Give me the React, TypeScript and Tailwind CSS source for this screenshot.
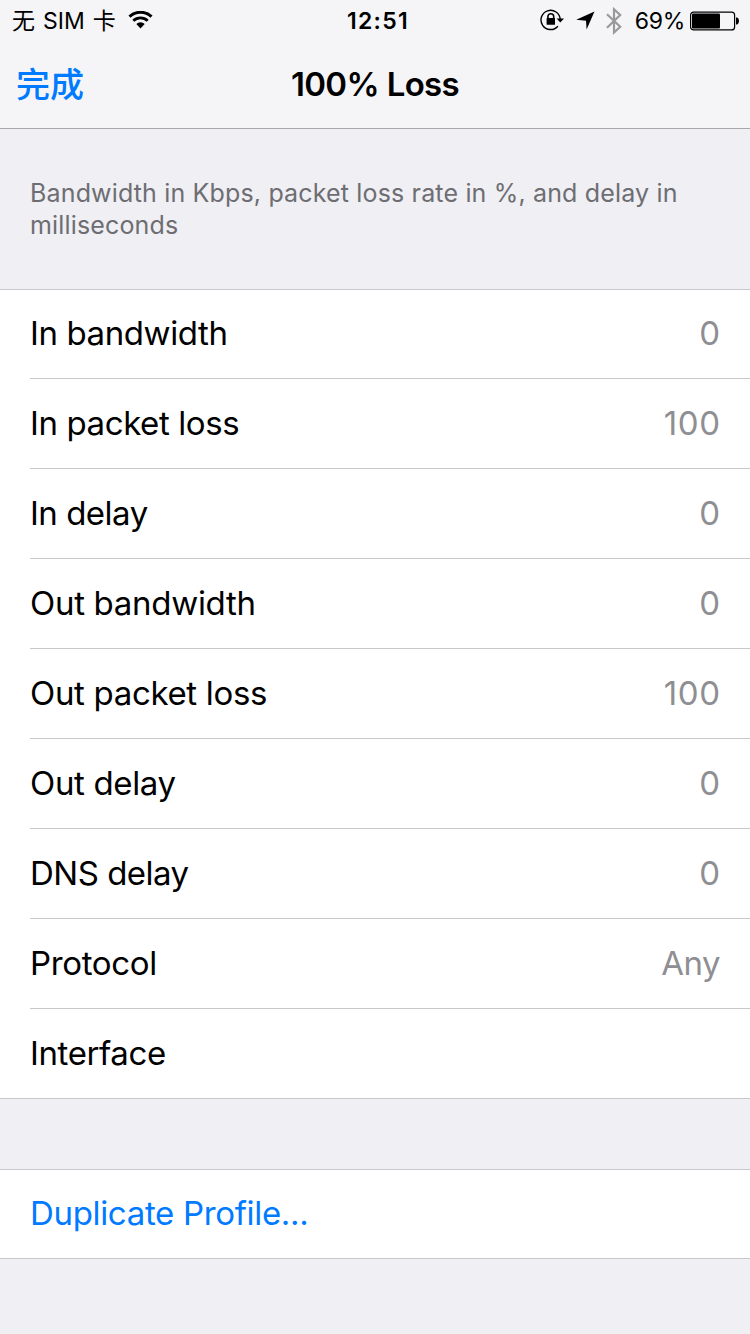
type Row = { label: string; value: string; labelClass: string; valueClass?: string };

const rows: Row[] = [
  { label: 'In bandwidth', value: '0', labelClass: 'tracking-[-0.4px]' },
  { label: 'In packet loss', value: '100', labelClass: 'tracking-[-0.4px]', valueClass: 'tracking-[0.6px] -mr-[0.6px]' },
  { label: 'In delay', value: '0', labelClass: 'tracking-[-0.5px]' },
  { label: 'Out bandwidth', value: '0', labelClass: 'tracking-[-0.3px]' },
  { label: 'Out packet loss', value: '100', labelClass: 'tracking-[-0.33px]', valueClass: 'tracking-[0.6px] -mr-[0.6px]' },
  { label: 'Out delay', value: '0', labelClass: 'tracking-[-0.35px]' },
  { label: 'DNS delay', value: '0', labelClass: 'tracking-[-0.5px]' },
  { label: 'Protocol', value: 'Any', labelClass: 'tracking-[-0.35px]', valueClass: 'tracking-[-0.5px]' },
  { label: 'Interface', value: '', labelClass: 'tracking-[-0.4px]' },
];

function WifiIcon() {
  return (
    <svg className="h-[18px] w-[25px]" viewBox="0 0 25 18" fill="none" aria-hidden="true">
      <path d="M1.5 5.7A15.8 15.8 0 0 1 23.5 5.7" stroke="#000" strokeWidth="3" />
      <path d="M5.3 9.7A10.4 10.4 0 0 1 19.7 9.7" stroke="#000" strokeWidth="2.8" />
      <path d="M8.3 13A6 6 0 0 1 16.7 13L12.5 17.5Z" fill="#000" />
    </svg>
  );
}

function RotationLockIcon() {
  return (
    <svg className="h-[22px] w-6" viewBox="0 0 24 22" fill="none" aria-hidden="true">
      <path d="M20.2 10.5A9.6 9.6 0 1 0 17.9 17.2" stroke="#000" strokeWidth="1.4" />
      <path d="M16.6 9.6H24L20.3 13.5Z" fill="#000" />
      <path d="M7.9 10V7.6a2.9 2.9 0 0 1 5.8 0V10" stroke="#000" strokeWidth="1.6" />
      <rect x="6.6" y="9.1" width="8.4" height="6.7" rx="0.6" fill="#000" />
    </svg>
  );
}

function LocationIcon() {
  return (
    <svg className="h-[19px] w-[19px]" viewBox="0 0 19 19" aria-hidden="true">
      <path d="M18.5 .4L10.6 18.4L10 9.8L.2 8.8Z" fill="#000" />
    </svg>
  );
}

function BluetoothIcon() {
  return (
    <svg className="h-7 w-4" viewBox="0 0 16 28" fill="none" aria-hidden="true">
      <path d="M1 7.3L14.2 19.8L8 25.5V2.3L14.2 8L1 20.7" stroke="#999" strokeWidth="2.2" />
    </svg>
  );
}

function BatteryIcon() {
  return (
    <svg className="h-5 w-[50px]" viewBox="0 0 50 20" fill="none" aria-hidden="true">
      <rect x=".6" y="1.1" width="44" height="17.8" rx="3" stroke="#000" strokeWidth="1.2" />
      <rect x="2" y="2.5" width="28" height="15" rx="1" fill="#000" />
      <path d="M46 6.5H47.2Q49 7 49 10T47.2 13.5H46Z" fill="#000" />
    </svg>
  );
}

export default function App() {
  return (
    <div className="flex h-[1334px] w-[750px] flex-col overflow-hidden bg-[#efeff4] font-['Inter','Noto_Sans_CJK_SC',sans-serif] text-black">
      <header className="h-[129px] shrink-0 border-b border-[#a7a7aa] bg-[#f5f5f7]">
        <div className="grid h-10 grid-cols-[1fr_auto_1fr] items-center pt-[2px] text-[23px]">
          <div className="flex items-center gap-3 pl-3">
            <span className="[word-spacing:1.5px]">无 SIM 卡</span>
            <span className="-mt-[2px] flex"><WifiIcon /></span>
          </div>
          <span className="pl-[6px] font-semibold tracking-[1.3px]">12:51</span>
          <div className="flex items-center justify-end pr-[10px]">
            <span className="-mt-[2px] flex"><RotationLockIcon /></span>
            <span className="-mt-px ml-3 flex"><LocationIcon /></span>
            <span className="-mt-px ml-[11px] flex"><BluetoothIcon /></span>
            <span className="mr-[5px] ml-[13px] tracking-[-0.3px]">69%</span>
            <span className="-mt-px flex"><BatteryIcon /></span>
          </div>
        </div>
        <div className="grid h-[88px] grid-cols-3 items-center px-4">
          <span className="text-[34px] font-medium text-[#007aff]">完成</span>
          <h1 className="pt-[2px] text-center text-[33px] font-semibold tracking-[-0.65px] whitespace-nowrap">100% Loss</h1>
        </div>
      </header>
      <p className="h-40 shrink-0 px-[30px] pt-12 text-[25px] leading-8 tracking-[0.16px] text-[#6d6d72]">
        Bandwidth in Kbps, packet loss rate in %, and delay in milliseconds
      </p>
      <main className="shrink-0 border-y border-[#c8c7cc] bg-white pl-[30px]">
        {rows.map(({ label, value, labelClass, valueClass }) => (
          <div
            key={label}
            className="flex h-[90px] items-center justify-between border-b border-[#c8c7cc] pr-[30px] text-[33px] first:h-[89px] last:h-[89px] last:border-0"
          >
            <span className={labelClass}>{label}</span>
            <span className={`text-[#8e8e93] ${valueClass ?? ''}`}>{value}</span>
          </div>
        ))}
      </main>
      <button className="mt-[70px] flex h-[90px] shrink-0 items-center border-y border-[#c8c7cc] bg-white px-[30px] text-left text-[33px] tracking-[-0.33px] text-[#007aff]">
        Duplicate Profile...
      </button>
    </div>
  );
}
